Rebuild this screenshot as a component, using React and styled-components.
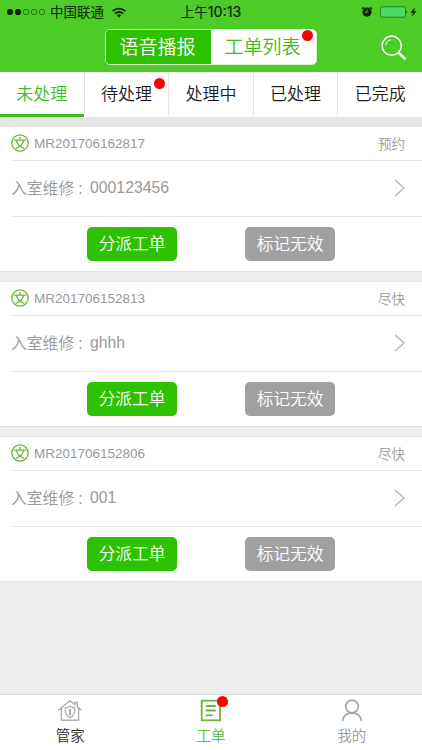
import React from 'react'
import styled, { createGlobalStyle } from 'styled-components'

const theme = {
  header: '#4dcb27',
  button: '#2dc100',
  green: '#3fb922',
  icon: '#69b736',
  gray: '#999',
  line: '#e3e3e3',
  red: '#fe0000',
}

const tabs = [
  { label: '未处理' },
  { label: '待处理', dot: true },
  { label: '处理中' },
  { label: '已处理' },
  { label: '已完成' },
]

const orders = [
  { id: 'MR201706162817', time: '预约', text: '000123456' },
  { id: 'MR201706152813', time: '尽快', text: 'ghhh' },
  { id: 'MR201706152806', time: '尽快', text: '001' },
]

const StatusBar = () => (
  <Status>
    <Carrier>
      <svg width="38" height="8" viewBox="0 0 38 8">
        <circle cx="3" cy="4" r="3.1" fill="#0c2606" />
        <circle cx="11" cy="4" r="3.1" fill="#0c2606" />
        <g fill="none" stroke="#1c5210" strokeWidth="0.7">
          <circle cx="19" cy="4" r="2.7" />
          <circle cx="27" cy="4" r="2.7" />
          <circle cx="35" cy="4" r="2.7" />
        </g>
      </svg>
      <CarrierName>中国联通</CarrierName>
      <svg width="14" height="11" viewBox="0 0 14 11" fill="none" stroke="#0c2606" strokeWidth="1.8">
        <path d="M0.7 4.1a9 9 0 0 1 12.6 0" />
        <path d="M3 6.6a5.8 5.8 0 0 1 8 0" />
        <path d="M7 10.4L4.9 8.2a3.1 3.1 0 0 1 4.2 0z" fill="#0c2606" stroke="none" />
      </svg>
    </Carrier>
    <Clock>上午<b>10:13</b></Clock>
    <Power>
      <svg width="12" height="12" viewBox="0 0 12 12">
        <circle cx="6" cy="6.1" r="4.6" fill="#0c2606" />
        <path d="M1 3L3 1.3M11 3L9 1.3" stroke="#0c2606" strokeWidth="1.2" />
        <path d="M6.2 3.5v3H4" fill="none" stroke={theme.header} strokeWidth="0.9" />
      </svg>
      <svg width="38" height="12" viewBox="0 0 38 12">
        <rect x="0.5" y="0.8" width="25" height="10.4" rx="1.5" fill="#4cd964" stroke="#216b14" strokeWidth="0.8" />
        <path d="M26.4 4.2q1.5 1.8 0 3.6z" fill="#0c2606" />
        <path d="M35 1l-4.7 5.8h2.7L31.5 11l5.2-6h-2.8z" fill="#0c2606" />
      </svg>
    </Power>
  </Status>
)

const OrderCard = ({ order }) => (
  <Card>
    <CardHead>
      <svg width="18" height="18" viewBox="0 0 18 18" fill="none" stroke={theme.icon} strokeWidth="1.3">
        <circle cx="9" cy="9" r="8.2" />
        <path d="M9 2.7v2.8M2.8 6.2h12.4M5.3 6.4c.9 3.5 3.4 6.4 7.9 8.1M12.7 6.4c-.9 3.5-3.4 6.4-7.9 8.1" />
      </svg>
      <OrderId>{order.id}</OrderId>
      <span>{order.time}</span>
    </CardHead>
    <CardBody>
      <Label>入室维修<Colon>:</Colon></Label>
      <Detail>{order.text}</Detail>
      <svg width="11" height="18" viewBox="0 0 11 18" fill="none" stroke="#b4b4b4" strokeWidth="1.3">
        <path d="M1 1l9 8-9 8" />
      </svg>
    </CardBody>
    <Actions>
      <Button type="button">分派工单</Button>
      <Button type="button" $muted>标记无效</Button>
    </Actions>
  </Card>
)

const App = () => {
  const [active, setActive] = React.useState(0)

  return (
    <Wrapper>
      <GlobalStyle />
      <Header>
        <StatusBar />
        <NavBar>
          <Segment>
            <SegmentItem>语音播报</SegmentItem>
            <SegmentItem $selected>
              工单列表
              <Dot $top="0px" $right="3px" />
            </SegmentItem>
          </Segment>
          <Search type="button" aria-label="搜索">
            <svg width="26" height="26" viewBox="0 0 26 26" fill="none" stroke="#fff">
              <circle cx="10.7" cy="10.7" r="9.6" strokeWidth="1.5" />
              <path d="M4.7 10.2q.6-4.7 5.4-5.5" strokeWidth="1" />
              <path d="M17.6 17.6l7 6.9" strokeWidth="2.6" />
            </svg>
          </Search>
        </NavBar>
      </Header>
      <Tabs>
        {tabs.map((tab, i) => (
          <Tab key={tab.label} type="button" $active={i === active} onClick={() => setActive(i)}>
            {tab.label}
            {tab.dot ? <Dot $top="6px" $right="3px" /> : null}
          </Tab>
        ))}
      </Tabs>
      <List>
        {orders.map((order) => <OrderCard key={order.id} order={order} />)}
      </List>
      <Footer>
        <FooterItem $color="#303030">
          <svg width="24" height="23" viewBox="0 0 24 23" fill="none" stroke="#adadad" strokeWidth="1.4">
            <path d="M3.4 10.2H1.7L12 1.8l4.7 3.8V3.5h2.5v4.2l3.1 2.5h-1.7v11H3.4z" />
            <path d="M12 7.3q2.2 1.5 4.8 1.5c.4 5-1.2 8.3-4.8 10-3.6-1.7-5.2-5-4.8-10Q9.8 8.8 12 7.3z" strokeWidth="1.2" />
            <path d="M12 10v6.5" strokeWidth="2.2" />
          </svg>
          管家
        </FooterItem>
        <FooterItem $color="#57bc3b">
          <IconBox>
            <svg width="24" height="23" viewBox="0 0 24 23" fill="none" stroke={theme.icon} strokeWidth="1.8">
              <rect x="2.7" y="1.7" width="18.3" height="19.6" />
              <path d="M6.7 7h10M6.7 11.5h10M6.7 16.3h7" />
            </svg>
            <Dot $top="-3px" $right="-5px" />
          </IconBox>
          工单
        </FooterItem>
        <FooterItem $color="#9c9c9c">
          <svg width="24" height="23" viewBox="0 0 24 23" fill="none" stroke="#a3a3a3" strokeWidth="1.7">
            <circle cx="12" cy="7.5" r="6.3" />
            <path d="M2.5 21.8c.8-5 4.6-8 9.5-8s8.7 3 9.5 8" />
          </svg>
          我的
        </FooterItem>
      </Footer>
    </Wrapper>
  )
}

const GlobalStyle = createGlobalStyle`
  * {
    box-sizing: border-box;
  }

  body {
    margin: 0;
  }

  button {
    border: 0;
    padding: 0;
    background: none;
    font: inherit;
    color: inherit;
  }

  svg {
    display: block;
    flex: none;
  }
`

const Wrapper = styled.div`
  display: flex;
  flex-direction: column;
  width: 422px;
  height: 750px;
  background: #eee;
  font-family: "Liberation Sans", "Noto Sans CJK SC", sans-serif;
  font-weight: 350;
`

const Header = styled.header`
  height: 72px;
  background: ${theme.header};
`

const Status = styled.div`
  display: grid;
  grid-template-columns: 1fr auto 1fr;
  align-items: center;
  height: 23px;
  padding: 0 4px 0 7px;
  color: #0c2606;
  font-size: 13.5px;
  font-weight: 400;
  line-height: 23px;
`

const Carrier = styled.div`
  display: flex;
  align-items: center;
`

const CarrierName = styled.span`
  margin: 0 8px 0 5px;
`

const Clock = styled.div`
  margin-right: 3px;
  font-size: 13.5px;

  b {
    font-family: Inter, sans-serif;
    font-size: 14px;
    font-weight: 500;
  }
`

const Power = styled.div`
  display: flex;
  justify-content: flex-end;
  align-items: center;
  gap: 7px;
`

const NavBar = styled.div`
  display: grid;
  grid-template-columns: 1fr 212px 1fr;
  align-items: center;
  height: 49px;
  padding-bottom: 1px;
`

const Segment = styled.div`
  grid-column: 2;
  display: flex;
  height: 36px;
  border: 1px solid #d8f8ca;
  border-radius: 5px;
`

const SegmentItem = styled.div`
  position: relative;
  flex: 1;
  padding-top: 1px;
  line-height: 34px;
  font-size: 19px;
  text-align: center;
  text-indent: -2px;
  color: ${(props) => (props.$selected ? theme.green : '#fff')};
  background: ${(props) => (props.$selected ? '#fff' : theme.button)};
  border-radius: ${(props) => (props.$selected ? '0 4px 4px 0' : '4px 0 0 4px')};
`

const Search = styled.button`
  justify-self: end;
  margin: 2px 15px 0 0;
`

const Dot = styled.i`
  position: absolute;
  top: ${(props) => props.$top};
  right: ${(props) => props.$right};
  width: 11px;
  height: 11px;
  border-radius: 50%;
  background: ${theme.red};
`

const Tabs = styled.nav`
  display: flex;
  height: 45px;
  background: #fff;
`

const Tab = styled.button`
  position: relative;
  flex: 1;
  padding-top: 4px;
  font-size: 17px;
  line-height: 38px;
  color: ${(props) => (props.$active ? theme.green : '#1c1c1c')};
  border-bottom: 3px solid ${(props) => (props.$active ? theme.green : '#fff')};

  & + & {
    border-left: 1px solid ${theme.line};
  }
`

const List = styled.main`
  flex: 1;
  display: flex;
  flex-direction: column;
  gap: 9px;
  border-top: 9px solid #e5e5e5;
`

const Card = styled.section`
  height: 146px;
  background: #fff;
  border-top: 1px solid #e4e4e4;
  border-bottom: 1px solid #e0e0e0;
`

const CardHead = styled.div`
  display: flex;
  align-items: center;
  height: 34px;
  margin-left: 11px;
  padding: 0 17px 1px 0;
  border-bottom: 1px solid ${theme.line};
  color: ${theme.gray};
  font-size: 13.5px;
`

const OrderId = styled.span`
  flex: 1;
  margin-left: 5px;
  padding-top: 1px;
  font-size: 13.5px;
`

const CardBody = styled.div`
  display: flex;
  align-items: center;
  height: 56px;
  margin-left: 11px;
  padding: 0 17px 2px 0;
  border-bottom: 1px solid ${theme.line};
  color: ${theme.gray};
`

const Label = styled.span`
  width: 79px;
  font-size: 15.8px;
`

const Colon = styled.span`
  margin-left: 4px;
`

const Detail = styled.span`
  flex: 1;
  font-size: 15.8px;
`

const Actions = styled.div`
  display: flex;
  align-items: center;
  gap: 68px;
  height: 53px;
  padding-left: 87px;
`

const Button = styled.button`
  width: 90px;
  height: 34px;
  padding-top: 1px;
  border-radius: 5px;
  color: #fff;
  background: ${(props) => (props.$muted ? '#a0a0a0' : theme.button)};
  font-size: 16.7px;
  line-height: 33px;
`

const Footer = styled.footer`
  display: flex;
  height: 56px;
  background: #fff;
  border-top: 1px solid #dcdcdc;
`

const FooterItem = styled.div`
  flex: 1;
  display: flex;
  flex-direction: column;
  align-items: center;
  padding-top: 4px;
  color: ${(props) => props.$color};
  font-size: 14.5px;
  line-height: 28px;
`

const IconBox = styled.div`
  position: relative;
`

export default App
